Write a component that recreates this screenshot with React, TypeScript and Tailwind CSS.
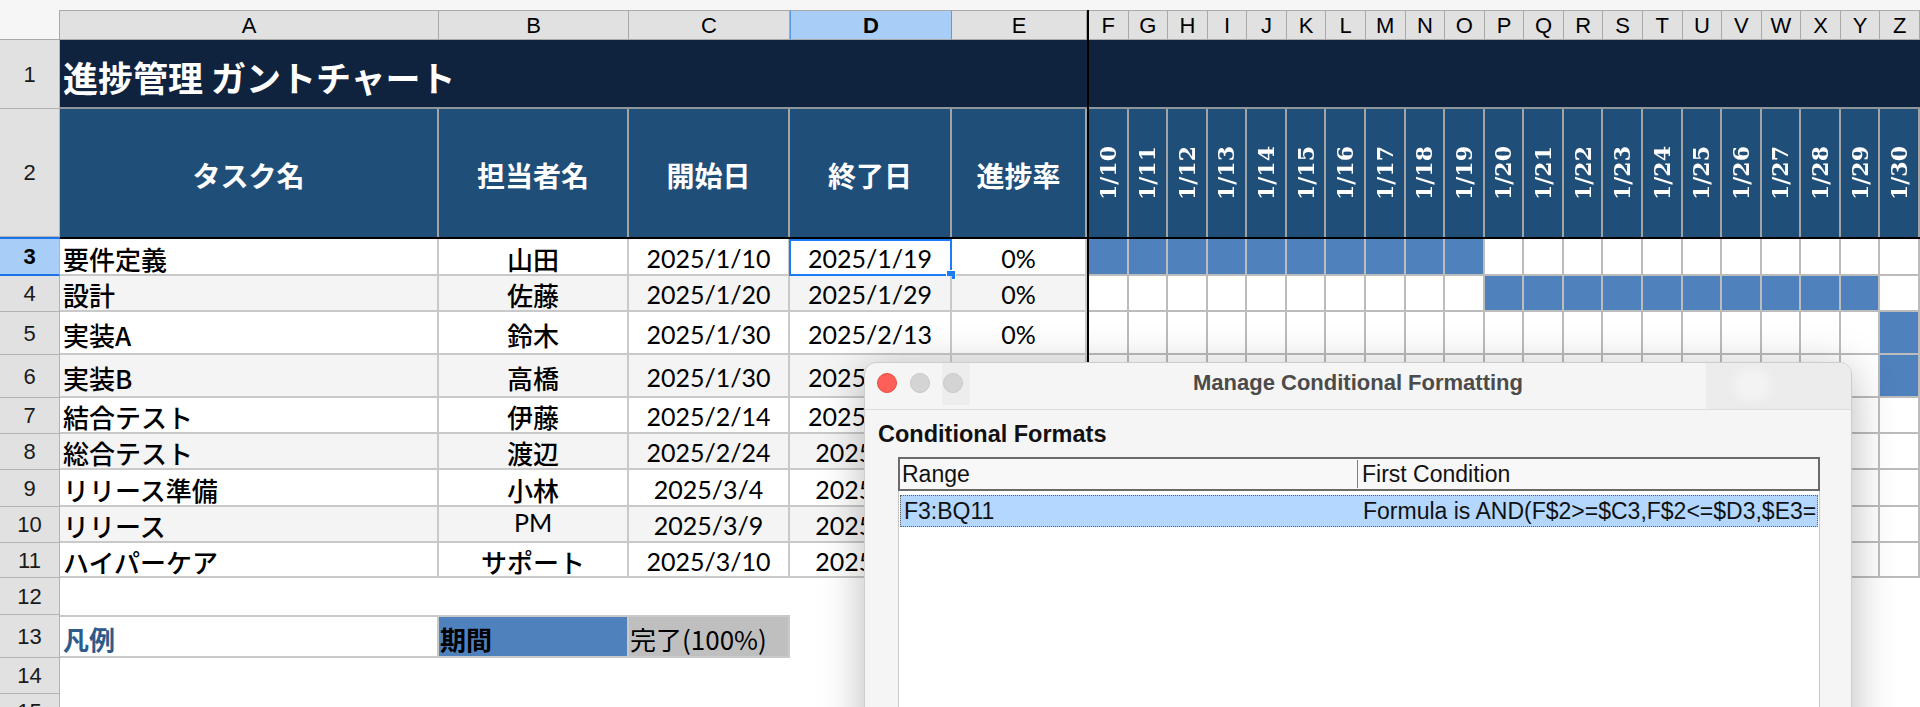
import React from "react";

const GRID =
  "grid grid-cols-[60px_379px_190px_161px_162px_135px_2px_repeat(21,minmax(0,1fr))]";

const SANS = "font-['Liberation_Sans',Arial,sans-serif]";
const CJK = "font-['Noto_Sans_CJK_JP',sans-serif]";
const LATO = "font-['Lato','Noto_Sans_CJK_JP',sans-serif]";
const SERIF = "font-['DejaVu_Serif','Liberation_Serif',serif]";

const letters = "FGHIJKLMNOPQRSTUVWXYZ".split("");
const days = letters.map((_, i) => `1/${10 + i}`);

type Task = {
  n: number;
  name: string;
  who: string;
  s: string;
  e: string;
  p: string;
  from: number;
  to: number;
  h: string;
};

const tasks: Task[] = [
  { n: 3, name: "要件定義", who: "山田", s: "2025/1/10", e: "2025/1/19", p: "0%", from: 0, to: 9, h: "h-[37px]" },
  { n: 4, name: "設計", who: "佐藤", s: "2025/1/20", e: "2025/1/29", p: "0%", from: 10, to: 19, h: "h-[36px]" },
  { n: 5, name: "実装A", who: "鈴木", s: "2025/1/30", e: "2025/2/13", p: "0%", from: 20, to: 20, h: "h-[43px]" },
  { n: 6, name: "実装B", who: "高橋", s: "2025/1/30", e: "2025/2/13", p: "0%", from: 20, to: 20, h: "h-[43px]" },
  { n: 7, name: "結合テスト", who: "伊藤", s: "2025/2/14", e: "2025/2/23", p: "0%", from: -1, to: -1, h: "h-[36px]" },
  { n: 8, name: "総合テスト", who: "渡辺", s: "2025/2/24", e: "2025/3/3", p: "0%", from: -1, to: -1, h: "h-[36px]" },
  { n: 9, name: "リリース準備", who: "小林", s: "2025/3/4", e: "2025/3/8", p: "0%", from: -1, to: -1, h: "h-[37px]" },
  { n: 10, name: "リリース", who: "PM", s: "2025/3/9", e: "2025/3/9", p: "0%", from: -1, to: -1, h: "h-[36px]" },
  { n: 11, name: "ハイパーケア", who: "サポート", s: "2025/3/10", e: "2025/4/9", p: "0%", from: -1, to: -1, h: "h-[35px]" },
];

function RowHead({ n, sel }: { n: number; sel?: boolean }) {
  return sel ? (
    <div className={"flex items-center justify-center bg-[#a8cdf6] border-r border-r-[#b3b3b3] border-b-2 border-b-[#1a73e8] text-[22px] font-bold text-black " + SANS}>
      {n}
    </div>
  ) : (
    <div className={"flex items-center justify-center bg-[#e1e1e1] border-r border-b border-[#b3b3b3] text-[22px] text-[#1a1a1a] " + SANS}>
      {n}
    </div>
  );
}

function DataRow({ t }: { t: Task }) {
  const even = t.n % 2 === 0;
  const bg = even ? "bg-[#f4f4f4]" : "bg-white";
  const base = "border-r-2 border-b-2 border-[#c9c9c9] flex items-center overflow-hidden whitespace-nowrap " + bg;
  const latinWho = /^[A-Za-z]+$/.test(t.who);
  return (
    <div className={GRID + " " + t.h}>
      <RowHead n={t.n} sel={t.n === 3} />
      <div className={base + " pl-[3px] pt-[4px]"}>
        <span className={CJK + " text-[26px] font-medium leading-[30px]"}>{t.name}</span>
      </div>
      <div className={base + " justify-center " + (latinWho ? "pb-[4px]" : "pt-[4px]")}>
        {latinWho ? (
          <span className={LATO + " text-[25px] leading-[30px]"}>{t.who}</span>
        ) : (
          <span className={CJK + " text-[26px] font-medium leading-[30px]"}>{t.who}</span>
        )}
      </div>
      <div className={base + " justify-center pt-[2px]"}>
        <span className={LATO + " text-[25px] leading-[30px]"}>{t.s}</span>
      </div>
      <div className={base + " justify-center pt-[2px] relative overflow-visible"}>
        <span className={LATO + " text-[25px] leading-[30px]"}>{t.e}</span>
        {t.n === 3 && (
          <div className="absolute left-[-1px] top-0 right-[-2px] bottom-[-2px] border-2 border-[#1b7cf5]">
            <div className="absolute right-[-6px] bottom-[-6px] w-[10px] h-[10px] bg-[#1b7cf5] border border-white" />
          </div>
        )}
      </div>
      <div className={base + " justify-center pt-[2px]"}>
        <span className={LATO + " text-[25px] leading-[30px]"}>{t.p}</span>
      </div>
      <div className="bg-black" />
      {letters.map((l, i) => (
        <div
          key={l}
          className={
            i >= t.from && i <= t.to
              ? "bg-[#4f81bd] border-r-2 border-b-2 border-[#bcbcbc]"
              : "bg-white border-r-2 border-b-2 border-[#bcbcbc]"
          }
        />
      ))}
    </div>
  );
}

export default function App() {
  return (
    <div className={"relative w-[1920px] h-[707px] overflow-hidden bg-white text-black " + SANS}>
      {/* column headers */}
      <div className={GRID + " h-[40px] bg-[#f6f6f6]"}>
        <div className="flex flex-col">
          <div className="h-[10px]" />
          <div className="h-[30px] border-r border-b border-[#a9a9a9]" />
        </div>
        {["A", "B", "C", "D", "E"].map((c) =>
          c === "D" ? (
            <div
              key={c}
              className="mt-[10px] h-[30px] flex items-center justify-center bg-[#a8cdf6] border-t border-b border-t-[#a9a9a9] border-b-[#a9a9a9] border-x border-x-[#5a9be6] text-[22px] font-bold"
            >
              {c}
            </div>
          ) : (
            <div
              key={c}
              className="mt-[10px] h-[30px] flex items-center justify-center bg-[#e1e1e1] border-t border-b border-r border-[#a9a9a9] text-[22px]"
            >
              {c}
            </div>
          )
        )}
        <div className="mt-[10px] bg-black" />
        {letters.map((l) => (
          <div
            key={l}
            className="mt-[10px] h-[30px] flex items-center justify-center bg-[#e1e1e1] border-t border-b border-r border-[#a9a9a9] text-[22px]"
          >
            {l}
          </div>
        ))}
      </div>

      {/* row 1 */}
      <div className={GRID + " h-[69px]"}>
        <RowHead n={1} />
        <div className="col-span-5 bg-[#10233e] border-b-2 border-[#8f959c] flex items-center pl-[3px] pt-[6px] overflow-hidden whitespace-nowrap">
          <span className={CJK + " text-[35px] font-bold text-white leading-none"}>進捗管理 ガントチャート</span>
        </div>
        <div className="bg-black" />
        <div className="col-[8/-1] bg-[#10233e] border-b-2 border-[#8f959c]" />
      </div>

      {/* row 2 */}
      <div className={GRID + " h-[128px]"}>
        <RowHead n={2} />
        {["タスク名", "担当者名", "開始日", "終了日", "進捗率"].map((h) => (
          <div key={h} className="bg-[#1f4e79] border-r-2 border-[#a3a3a3] flex items-center justify-center pt-[4px]">
            <span className={CJK + " text-[28px] font-bold text-white leading-none"}>{h}</span>
          </div>
        ))}
        <div className="bg-black" />
        {days.map((d) => (
          <div key={d} className="bg-[#1f4e79] border-r-2 border-[#a3a3a3] flex items-center justify-center">
            <span className={SERIF + " [writing-mode:vertical-rl] rotate-180 text-[22px] font-bold text-white leading-none"}>
              {d}
            </span>
          </div>
        ))}
      </div>
      <div className="grid grid-cols-[60px_1fr] h-[2px]">
        <div className="bg-[#1a73e8]" />
        <div className="bg-black" />
      </div>

      {tasks.map((t) => (
        <DataRow key={t.n} t={t} />
      ))}

      {/* row 12 */}
      <div className={GRID + " h-[37px]"}>
        <RowHead n={12} />
      </div>
      {/* row 13 legend */}
      <div className={GRID + " h-[43px]"}>
        <RowHead n={13} />
        <div className="border-y-2 border-r-2 border-[#c9c9c9] flex items-center pl-[3px] pt-[4px]">
          <span className={CJK + " text-[26px] font-bold text-[#2e5b8a] leading-[30px]"}>凡例</span>
        </div>
        <div className="border-y-2 border-r-2 border-[#c9c9c9] bg-[#4f81bd] flex items-center pl-[1px] pt-[4px]">
          <span className={CJK + " text-[26px] font-bold leading-[30px]"}>期間</span>
        </div>
        <div className="border-y-2 border-r-2 border-[#c9c9c9] bg-[#bfbfbf] flex items-center pl-[1px] pt-[4px] overflow-hidden whitespace-nowrap">
          <span className={CJK + " text-[26px] font-normal leading-[30px]"}>完了(100%)</span>
        </div>
      </div>
      <div className={GRID + " h-[36px]"}>
        <RowHead n={14} />
      </div>
      <div className={GRID + " h-[36px]"}>
        <RowHead n={15} />
      </div>

      {/* dialog */}
      <div className="absolute left-[864px] top-[362px] w-[988px] h-[420px] rounded-t-[12px] bg-[#f5f5f5] border border-[#cdcdcd] shadow-[0_8px_44px_rgba(0,0,0,0.28)] overflow-hidden">
        <div className="relative grid grid-cols-[1fr_auto_1fr] items-center h-[47px] pb-[6px] border-b border-[#dcdcdc]">
          <div className="absolute left-[77px] top-0 w-[28px] h-[42px] bg-[#ededed]" />
          <div className="absolute right-0 top-0 w-[145px] h-[46px] bg-[#ececec] overflow-hidden">
            <div className="absolute left-[28px] top-[6px] w-[36px] h-[32px] rounded-full bg-[#f3f3f3] blur-[5px]" />
          </div>
          <div className="relative flex items-center gap-[13px] pl-[12px]">
            <span className="w-[20px] h-[20px] rounded-full bg-[#fe5f57] border border-[#e5493f]" />
            <span className="w-[20px] h-[20px] rounded-full bg-[#d4d4d4] border border-[#c7c7c7]" />
            <span className="w-[20px] h-[20px] rounded-full bg-[#d4d4d4] border border-[#c7c7c7]" />
          </div>
          <div className="relative text-[22px] font-bold text-[#4b4b4b] leading-none">Manage Conditional Formatting</div>
          <div />
        </div>
        <div className="pl-[13px] pr-[31px] pt-[11px]">
          <div className="text-[23.5px] leading-[27px] font-bold text-[#111]">Conditional Formats</div>
          <div className="ml-[20px] mt-[9px]">
            <div className="flex h-[34px] border-2 border-[#6a6a6a] bg-[#f8f8f8] text-[23px] leading-none text-[#111]">
              <div className="w-[457px] flex items-center pl-[2px]">Range</div>
              <div className="w-px my-[1px] bg-[#7d7d7d]" />
              <div className="flex-1 flex items-center pl-[4px] whitespace-nowrap overflow-hidden">First Condition</div>
            </div>
            <div className="h-[300px] bg-white border-x border-[#c8c8c8] px-px pt-[4px]">
              <div className="grid grid-cols-[462px_1fr] h-[32px] bg-[#b3d7ff] border border-dotted border-[#6b5c45] text-[23px] leading-none text-[#111] whitespace-nowrap overflow-hidden">
                <div className="flex items-center pl-[3px]">F3:BQ11</div>
                <div className="flex items-center overflow-hidden">Formula is AND(F$2&gt;=$C3,F$2&lt;=$D3,$E3=100%)</div>
              </div>
            </div>
          </div>
        </div>
      </div>
    </div>
  );
}
